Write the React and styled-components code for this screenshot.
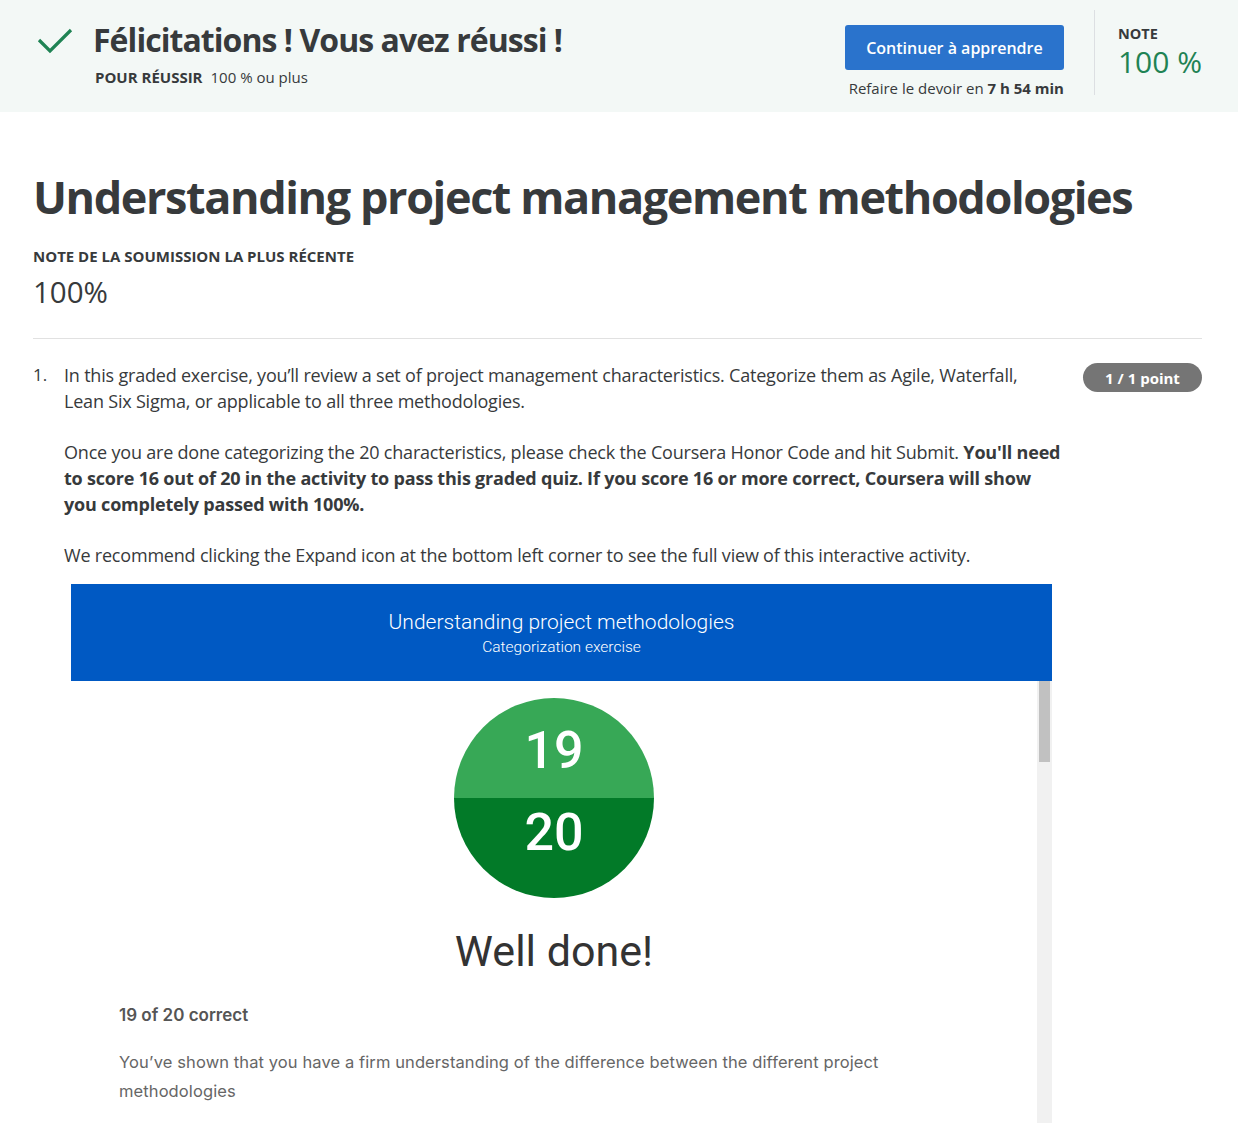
import React from "react";
import styled, { createGlobalStyle } from "styled-components";

const GlobalStyle = createGlobalStyle`
  body {
    margin: 0;
    background: #ffffff;
    font-family: "Open Sans", "Noto Sans", sans-serif;
    color: #373a3c;
  }
`;

const Page = styled.div`
  width: 1238px;
  min-height: 1123px;
  overflow: hidden;
`;

const Banner = styled.header`
  display: flex;
  align-items: flex-start;
  height: 112px;
  box-sizing: border-box;
  padding: 0 36px 0 37px;
  background: #f3f8f6;
`;

const BannerLeft = styled.div`
  display: flex;
  align-items: flex-start;
  flex: 1;
  padding-top: 20px;
`;

const CheckIcon = styled.svg`
  width: 36px;
  height: 36px;
  margin-top: 7px;
  margin-right: 20px;
  flex-shrink: 0;
`;

const BannerTitle = styled.h1`
  margin: 0;
  font-size: 32px;
  line-height: 40px;
  font-weight: 700;
  letter-spacing: -0.95px;
  color: #373a3c;
`;

const PassLine = styled.div`
  margin-top: 6px;
  margin-left: 2px;
  font-size: 15px;
  line-height: 22px;
  color: #373a3c;
`;

const Label = styled.span`
  font-weight: 700;
  text-transform: uppercase;
  margin-right: 8px;
`;

const ActionBlock = styled.div`
  display: flex;
  flex-direction: column;
  align-items: flex-end;
  padding-top: 25px;
`;

const PrimaryButton = styled.button`
  width: 219px;
  height: 45px;
  border: none;
  border-radius: 3px;
  background: #2a73cc;
  color: #ffffff;
  font-family: inherit;
  font-size: 16px;
  font-weight: 600;
  cursor: pointer;
`;

const RetryText = styled.div`
  margin-top: 8px;
  font-size: 15px;
  line-height: 20px;
  color: #373a3c;
`;

const VDivider = styled.div`
  width: 1px;
  height: 85px;
  margin: 10px 23px 0 30px;
  background: #dcdfe2;
`;

const GradeBlock = styled.div`
  display: flex;
  flex-direction: column;
  padding-top: 24px;
`;

const GradeLabel = styled.div`
  font-size: 14.5px;
  line-height: 20px;
  font-weight: 700;
  color: #373a3c;
`;

const GradeValue = styled.div`
  font-size: 30px;
  line-height: 36px;
  color: #1f8354;
`;

const Main = styled.main`
  padding: 57px 36px 0 33px;
`;

const PageTitle = styled.h2`
  margin: 0;
  font-size: 45px;
  line-height: 56px;
  font-weight: 700;
  letter-spacing: -1.4px;
  color: #373a3c;
`;

const SubmissionLabel = styled.div`
  margin-top: 21px;
  font-size: 15px;
  line-height: 20px;
  font-weight: 700;
  color: #373a3c;
`;

const SubmissionScore = styled.div`
  margin-top: 8px;
  font-size: 29.5px;
  line-height: 36px;
  color: #373a3c;
`;

const HDivider = styled.hr`
  margin: 28px 0 0;
  border: none;
  border-top: 1px solid #e1e1e1;
`;

const Question = styled.section`
  display: flex;
  align-items: flex-start;
  padding-top: 23px;
`;

const QuestionNumber = styled.div`
  width: 31px;
  flex-shrink: 0;
  font-size: 17px;
  line-height: 26px;
`;

const QuestionBody = styled.div`
  flex: 1;
  min-width: 0;
  font-size: 18px;
  line-height: 26px;
  letter-spacing: -0.2px;
  color: #373a3c;

  p {
    margin: 0 0 25px;
  }
  strong {
    font-weight: 700;
  }
`;

const PointBadge = styled.div`
  flex-shrink: 0;
  margin-left: 12px;
  margin-top: 1px;
  width: 119px;
  height: 29px;
  border-radius: 15px;
  background: #757575;
  color: #ffffff;
  font-size: 15px;
  font-weight: 700;
  display: flex;
  align-items: center;
  justify-content: center;
`;

const Embed = styled.div`
  margin: -9px 0 0 7px;
  width: 981px;
  letter-spacing: normal;
  font-family: Roboto, "Noto Sans", sans-serif;
`;

const EmbedHeader = styled.div`
  height: 97px;
  background: #0059c3;
  color: #ffffff;
  display: flex;
  flex-direction: column;
  align-items: center;
  justify-content: center;
  gap: 2px;
`;

const EmbedTitle = styled.div`
  font-size: 21px;
  line-height: 26px;
  font-weight: 300;
`;

const EmbedSubtitle = styled.div`
  font-size: 15.5px;
  line-height: 20px;
  font-weight: 300;
`;

const EmbedFrame = styled.div`
  display: flex;
  height: 442px;
`;

const EmbedContent = styled.div`
  flex: 1;
  display: flex;
  flex-direction: column;
  align-items: center;
  padding-top: 17px;
`;

const Scrollbar = styled.div`
  width: 15px;
  background: #f1f1f1;
  display: flex;
  flex-direction: column;
`;

const ScrollThumb = styled.div`
  height: 81px;
  margin: 0 2px;
  background: #c1c1c1;
`;

const ScoreCircle = styled.div`
  width: 200px;
  height: 200px;
  border-radius: 50%;
  overflow: hidden;
  display: flex;
  flex-direction: column;
`;

const ScoreHalf = styled.div`
  height: 100px;
  box-sizing: border-box;
  padding-top: ${(p) => (p.$top ? "27px" : "9px")};
  text-align: center;
  background: ${(p) => (p.$top ? "#37a856" : "#027a28")};
  color: #ffffff;
  font-size: 52px;
  font-weight: 500;
  line-height: 52px;
`;

const WellDone = styled.div`
  margin-top: 28px;
  font-size: 43px;
  line-height: 50px;
  color: #333333;
`;

const Feedback = styled.div`
  align-self: stretch;
  padding: 28px 0 0 48px;
  font-family: Inter, Roboto, sans-serif;
`;

const FeedbackHead = styled.div`
  font-size: 17px;
  line-height: 22px;
  font-weight: 600;
  color: #555555;
`;

const FeedbackText = styled.div`
  margin-top: 22px;
  font-size: 16.5px;
  line-height: 29px;
  letter-spacing: 0.1px;
  max-width: 800px;
  color: #666666;
`;

export default function App() {
  return (
    <Page>
      <GlobalStyle />
      <Banner>
        <BannerLeft>
          <CheckIcon viewBox="0 0 36 36">
            <path d="M2 13 L13 24 L34 3" fill="none" stroke="#1f8354" strokeWidth="3.2" />
          </CheckIcon>
          <div>
            <BannerTitle>Félicitations ! Vous avez réussi !</BannerTitle>
            <PassLine>
              <Label>Pour réussir</Label>100 % ou plus
            </PassLine>
          </div>
        </BannerLeft>
        <ActionBlock>
          <PrimaryButton>Continuer à apprendre</PrimaryButton>
          <RetryText>
            Refaire le devoir en <strong>7 h 54 min</strong>
          </RetryText>
        </ActionBlock>
        <VDivider />
        <GradeBlock>
          <GradeLabel>NOTE</GradeLabel>
          <GradeValue>100 %</GradeValue>
        </GradeBlock>
      </Banner>

      <Main>
        <PageTitle>Understanding project management methodologies</PageTitle>
        <SubmissionLabel>NOTE DE LA SOUMISSION LA PLUS RÉCENTE</SubmissionLabel>
        <SubmissionScore>100%</SubmissionScore>
        <HDivider />

        <Question>
          <QuestionNumber>1.</QuestionNumber>
          <QuestionBody>
            <p>
              In this graded exercise, you’ll review a set of project management characteristics. Categorize them
              as Agile, Waterfall,
              <br />
              Lean Six Sigma, or applicable to all three methodologies.
            </p>
            <p>
              Once you are done categorizing the 20 characteristics, please check the Coursera Honor Code and hit
              Submit. <strong>You'll need</strong>
              <br />
              <strong>
                to score 16 out of 20 in the activity to pass this graded quiz. If you score 16 or more correct,
                Coursera will show
                <br />
                you completely passed with 100%.
              </strong>
            </p>
            <p>
              We recommend clicking the Expand icon at the bottom left corner to see the full view of this
              interactive activity.
            </p>
            <Embed>
              <EmbedHeader>
                <EmbedTitle>Understanding project methodologies</EmbedTitle>
                <EmbedSubtitle>Categorization exercise</EmbedSubtitle>
              </EmbedHeader>
              <EmbedFrame>
                <EmbedContent>
                  <ScoreCircle>
                    <ScoreHalf $top>19</ScoreHalf>
                    <ScoreHalf>20</ScoreHalf>
                  </ScoreCircle>
                  <WellDone>Well done!</WellDone>
                  <Feedback>
                    <FeedbackHead>19 of 20 correct</FeedbackHead>
                    <FeedbackText>
                      You’ve shown that you have a firm understanding of the difference between the different project
                      methodologies
                    </FeedbackText>
                  </Feedback>
                </EmbedContent>
                <Scrollbar>
                  <ScrollThumb />
                </Scrollbar>
              </EmbedFrame>
            </Embed>
          </QuestionBody>
          <PointBadge>1 / 1 point</PointBadge>
        </Question>
      </Main>
    </Page>
  );
}
